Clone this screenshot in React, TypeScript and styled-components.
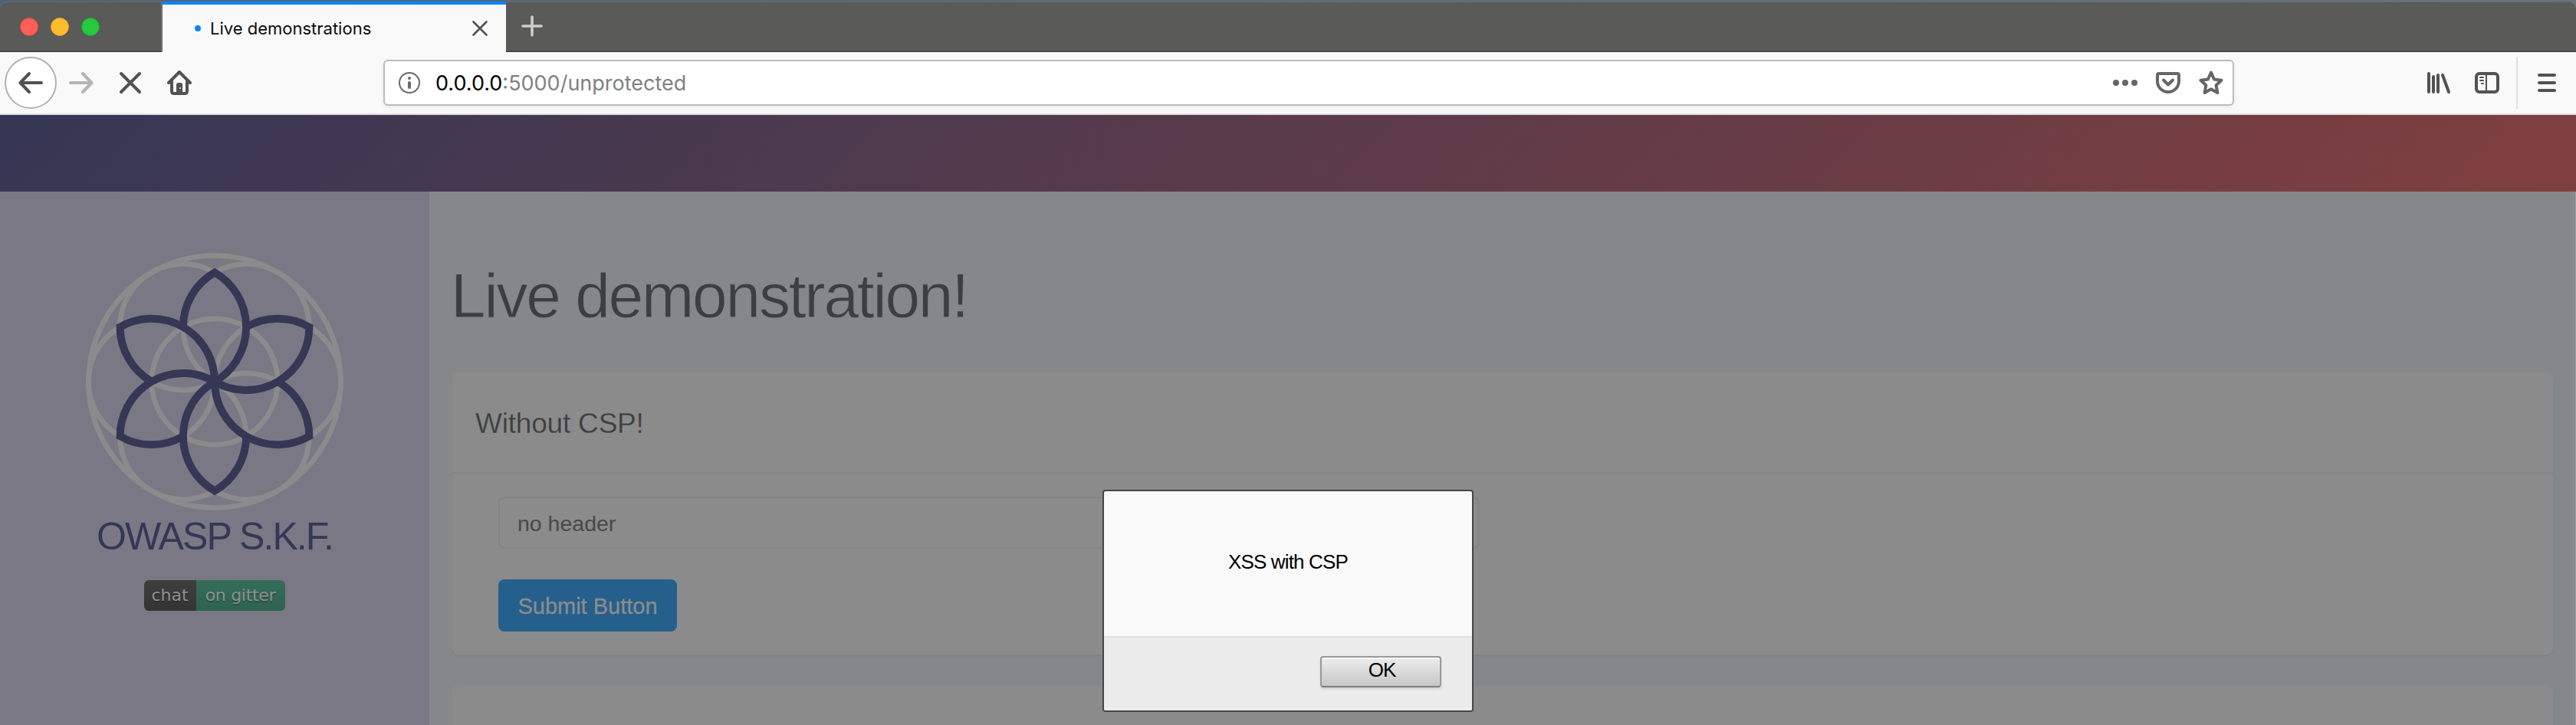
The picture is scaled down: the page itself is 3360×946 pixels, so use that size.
import React from "react";
import styled, { createGlobalStyle } from "styled-components";

const sans = `"Liberation Sans", Arial, sans-serif`;
const ui = `Inter, Roboto, sans-serif`;

const GlobalStyle = createGlobalStyle`
  *, *::before, *::after { box-sizing: border-box; }
  body { margin: 0; background: #66737f; font-family: ${sans}; }
  h1, h2, p { margin: 0; font-weight: 400; }
  button { font: inherit; }
  svg { display: block; flex: none; }
`;

const Window = styled.div`
  display: flex;
  flex-direction: column;
  width: 3360px;
  height: 946px;
  padding-top: 2px;
  overflow: hidden;
  background: linear-gradient(90deg, #4f6478, #66737f);
`;

const TabBar = styled.div`
  display: flex;
  height: 66px;
  background: #5a5a59;
  border-radius: 10px 10px 0 0;
  box-shadow: inset 0 1px 0 #6b6b6b, inset 0 -2px 0 #454444;
`;

const TrafficLights = styled.div`
  display: flex;
  align-items: center;
  gap: 16px;
  width: 212px;
  padding: 0 0 0 26px;
  border-right: 2px solid #6e6e6e;
`;

const Light = styled.span<{ $fill: string; $edge: string }>`
  width: 24px;
  height: 24px;
  border-radius: 50%;
  background: ${(p) => p.$fill};
  border: 1px solid ${(p) => p.$edge};
`;

const Tab = styled.div`
  display: flex;
  align-items: center;
  width: 448px;
  padding: 0 23px 0 42px;
  background: #f9f9fa;
  border-top: 4px solid #0a84ff;
`;

const LoadingDot = styled.span`
  width: 8px;
  height: 8px;
  border-radius: 50%;
  background: #0a84ff;
`;

const TabTitle = styled.span`
  flex: 1;
  margin-left: 12px;
  font: 400 22px/28px ${ui};
  color: #0c0c0d;
  white-space: nowrap;
`;

const NewTab = styled.div`
  display: flex;
  align-items: center;
  padding: 0 0 2px 20px;
`;

const Toolbar = styled.div`
  display: flex;
  align-items: center;
  height: 82px;
  padding: 0 22px 0 6px;
  background: #f9f9fa;
  border-bottom: 2px solid #e0e0e1;
`;

const BackButton = styled.div`
  display: flex;
  align-items: center;
  justify-content: center;
  width: 68px;
  height: 68px;
  border: 2px solid #b1b1b1;
  border-radius: 50%;
  background: #fff;
`;

const NavIcons = styled.div`
  display: flex;
  gap: 32px;
  width: 426px;
  padding-left: 16px;
`;

const UrlBar = styled.div`
  display: flex;
  align-items: center;
  width: 2414px;
  height: 60px;
  padding: 0 12px 0 18px;
  background: #fff;
  border: 2px solid #bcbcbc;
  border-radius: 6px;
  box-shadow: 0 2px 6px rgba(0, 0, 0, 0.06);
`;

const Url = styled.span`
  flex: 1;
  margin: 2px 0 0 20px;
  font: 400 27px/36px ${ui};
  color: #808080;
  white-space: nowrap;
  b { font-weight: 400; color: #000; }
`;

const UrlActions = styled.div`
  display: flex;
  align-items: center;
  gap: 24px;
`;

const ToolIcons = styled.div`
  display: flex;
  align-items: center;
  gap: 32px;
  margin-left: auto;
`;

const Separator = styled.span`
  width: 2px;
  height: 68px;
  margin: 0 -10px;
  background: #e0e0e1;
`;

const Banner = styled.header`
  flex: none;
  height: 100px;
  background: linear-gradient(135deg, #353755, #803f3f);
`;

const Page = styled.div`
  display: flex;
  flex: 1;
  min-height: 0;
  background: #868788;
  box-shadow: inset -1px 0 0 #a0a1a2;
`;

const Sidebar = styled.aside`
  display: flex;
  flex-direction: column;
  align-items: center;
  width: 560px;
  padding-top: 80px;
  background: #797884;
`;

const Brand = styled.p`
  margin-top: 7px;
  font-size: 50px;
  line-height: 54px;
  letter-spacing: -1.9px;
  color: #353755;
  white-space: nowrap;
`;

const Badge = styled.div`
  display: flex;
  margin-top: 30px;
  height: 40px;
  border-radius: 6px;
  overflow: hidden;
  font: 22px/40px "DejaVu Sans", sans-serif;
  color: #8f8f8f;
  text-shadow: 0 2px 0 rgba(0, 0, 0, 0.25);
  white-space: nowrap;
`;

const BadgePart = styled.span<{ $width: number; $from: string; $to: string; $tracking: number }>`
  width: ${(p) => p.$width}px;
  padding-right: 1px;
  letter-spacing: ${(p) => p.$tracking}px;
  text-align: center;
  background: linear-gradient(${(p) => p.$from}, ${(p) => p.$to});
`;

const Content = styled.main`
  flex: 1;
  padding: 90px 30px 0;
`;

const Title = styled.h1`
  margin-left: -2px;
  font-size: 82px;
  line-height: 92px;
  letter-spacing: -2.2px;
  color: #3c3f40;
  -webkit-text-stroke: 0.8px #868788;
  white-space: nowrap;
`;

const Card = styled.section`
  height: 368px;
  margin-top: 54px;
  background: #8b8b8b;
  border-radius: 8px;
  box-shadow: 0 2px 2px rgba(0, 0, 0, 0.05);
  & + & { margin-top: 40px; }
`;

const CardHeader = styled.div`
  display: flex;
  align-items: center;
  height: 132px;
  padding: 3px 30px 0;
  border-bottom: 2px solid #848484;
`;

const CardTitle = styled.h2`
  font-size: 37px;
  line-height: 40px;
  letter-spacing: -0.2px;
  color: #3c3f40;
  -webkit-text-stroke: 0.3px #8b8b8b;
`;

const CardBody = styled.div`
  display: flex;
  flex-direction: column;
  align-items: flex-start;
  gap: 40px;
  padding: 30px 60px;
`;

const Field = styled.div`
  width: 1280px;
  height: 68px;
  padding: 0 23px;
  border: 2px solid #848484;
  border-radius: 8px;
  font-size: 28.5px;
  line-height: 66px;
  color: #484848;
`;

const Submit = styled.button`
  width: 233px;
  height: 68px;
  padding: 2px 0 0;
  border: 0;
  border-radius: 8px;
  background: #255f8c;
  color: #8c8c8c;
  font-size: 29px;
  white-space: nowrap;
  -webkit-text-stroke: 0.3px #8c8c8c;
`;

const Dialog = styled.div`
  position: absolute;
  left: 1438px;
  top: 639px;
  display: flex;
  flex-direction: column;
  width: 484px;
  height: 290px;
  background: #f9f9f9;
  border: 2px solid #464646;
  border-radius: 4px;
  overflow: hidden;
  font-size: 26px;
  color: #000;
`;

const Message = styled.div`
  display: flex;
  flex: 1;
  align-items: center;
  justify-content: center;
  padding-bottom: 4px;
  letter-spacing: -0.85px;
`;

const DialogFooter = styled.div`
  display: flex;
  justify-content: flex-end;
  height: 97px;
  padding: 24px 40px 0;
  background: #ececec;
  border-top: 2px solid #e0e0e0;
`;

const OkButton = styled.button`
  width: 158px;
  height: 41px;
  padding: 0 0 5px 3px;
  border: 2px solid #999;
  border-bottom-color: #7e7e7e;
  border-radius: 4px;
  background: linear-gradient(#ededed, #c6c6c6);
  box-shadow: inset 0 2px 0 #fafafa, 0 2px 3px rgba(0, 0, 0, 0.12);
  color: #000;
  line-height: 32px;
  letter-spacing: -1px;
`;

type IconProps = { color?: string; children: React.ReactNode; size?: number };
const Icon = ({ color = "#525253", size = 32, children }: IconProps) => (
  <svg width={size} height={size} viewBox="0 0 32 32" fill="none" stroke={color} strokeWidth="4" strokeLinecap="round" strokeLinejoin="round">
    {children}
  </svg>
);

const Flower = () => {
  const turns = [0, 60, 120, 180, 240, 300];
  return (
    <svg width="336" height="336" viewBox="-168 -168 336 336" fill="none">
      <g stroke="#8b8b8b" strokeWidth="6.8">
        <circle r="164.6" />
        <circle r="82.2" />
        {turns.map((t) => (
          <circle key={t} cx="82.3" r="82.3" transform={`rotate(${t})`} />
        ))}
      </g>
      <g stroke="#353755" strokeWidth="10" strokeMiterlimit="10">
        {turns.map((t) => (
          <path key={t} d="M0 0A82.3 82.3 0 0 0 0 -142.5A82.3 82.3 0 0 0 -41.15 -71.3" transform={`rotate(${t})`} />
        ))}
      </g>
    </svg>
  );
};

export default function App() {
  return (
    <>
      <GlobalStyle />
      <Window>
        <TabBar>
          <TrafficLights>
            <Light $fill="#ff5f57" $edge="#e2463f" />
            <Light $fill="#febc2e" $edge="#e1a116" />
            <Light $fill="#28c840" $edge="#12ac28" />
          </TrafficLights>
          <Tab>
            <LoadingDot />
            <TabTitle>Live demonstrations</TabTitle>
            <svg width="22" height="22" viewBox="0 0 22 22" stroke="#525253" strokeWidth="2.6" strokeLinecap="round">
              <path d="M2.5 2.5l17 17M19.5 2.5l-17 17" />
            </svg>
          </Tab>
          <NewTab>
            <svg width="28" height="28" viewBox="0 0 28 28" stroke="#cdcdcd" strokeWidth="3.6" strokeLinecap="round">
              <path d="M14 2v24M2 14h24" />
            </svg>
          </NewTab>
        </TabBar>
        <Toolbar>
          <BackButton>
            <Icon><path d="M30 16H3M14 4L2.5 16L14 28" /></Icon>
          </BackButton>
          <NavIcons>
            <Icon color="#b4b4b4"><path d="M2 16H29M18 4L29.5 16L18 28" /></Icon>
            <Icon><path d="M4 4L28 28M28 4L4 28" /></Icon>
            <Icon>
              <path d="M2 16L16 2L30 16" />
              <path d="M6 14V27Q6 30 9 30H23Q26 30 26 27V14" />
              <path d="M12 29V18.5Q12 16 14.5 16H17.5Q20 16 20 18.5V29Z" fill="#525253" stroke="none" />
              <circle cx="17" cy="23" r="1" fill="#f9f9fa" stroke="none" />
            </Icon>
          </NavIcons>
          <UrlBar>
            <svg width="28" height="28" viewBox="0 0 28 28" fill="none">
              <circle cx="14" cy="14" r="13" stroke="#6a6a6a" strokeWidth="2" />
              <circle cx="14" cy="8" r="2" fill="#6a6a6a" />
              <path d="M14 14v6" stroke="#6a6a6a" strokeWidth="4" strokeLinecap="round" />
            </svg>
            <Url><b>0.0.0.0</b>:5000/unprotected</Url>
            <UrlActions>
              <Icon color="#666">
                <g fill="#666" stroke="none">
                  <circle cx="4" cy="16" r="4" />
                  <circle cx="16" cy="16" r="4" />
                  <circle cx="28" cy="16" r="4" />
                </g>
              </Icon>
              <Icon color="#666">
                <path d="M4 4H28Q30 4 30 6V14A14 14 0 0 1 2 14V6Q2 4 4 4Z" />
                <path d="M10 12.5L16 18.5L22 12.5" />
              </Icon>
              <Icon color="#666">
                <path d="M16 2.5L20 11.5L29.5 12.7L22.6 19.3L24.4 29L16 24.3L7.6 29L9.4 19.3L2.5 12.7L12 11.5Z" />
              </Icon>
            </UrlActions>
          </UrlBar>
          <ToolIcons>
            <Icon>
              <path d="M4 4V28M10 8V28M16 6V28M22 6L30 28" />
            </Icon>
            <Icon>
              <rect x="2" y="4" width="28" height="24" rx="4" />
              <path d="M15 4V28M7 9H11M7 13H11M9 17H11" strokeWidth="2" />
            </Icon>
            <Separator />
            <Icon>
              <path d="M6 6H26M6 16H26M6 26H26" />
            </Icon>
          </ToolIcons>
        </Toolbar>
        <Banner />
        <Page>
          <Sidebar>
            <Flower />
            <Brand>OWASP S.K.F.</Brand>
            <Badge>
              <BadgePart $width={68} $tracking={0} $from="#3e3e3e" $to="#343434">chat</BadgePart>
              <BadgePart $width={116} $tracking={-0.3} $from="#356d5a" $to="#2e6151">on gitter</BadgePart>
            </Badge>
          </Sidebar>
          <Content>
            <Title>Live demonstration!</Title>
            <Card>
              <CardHeader>
                <CardTitle>Without CSP!</CardTitle>
              </CardHeader>
              <CardBody>
                <Field>no header</Field>
                <Submit>Submit Button</Submit>
              </CardBody>
            </Card>
            <Card />
          </Content>
        </Page>
      </Window>
      <Dialog role="dialog">
        <Message>XSS with CSP</Message>
        <DialogFooter>
          <OkButton>OK</OkButton>
        </DialogFooter>
      </Dialog>
    </>
  );
}
